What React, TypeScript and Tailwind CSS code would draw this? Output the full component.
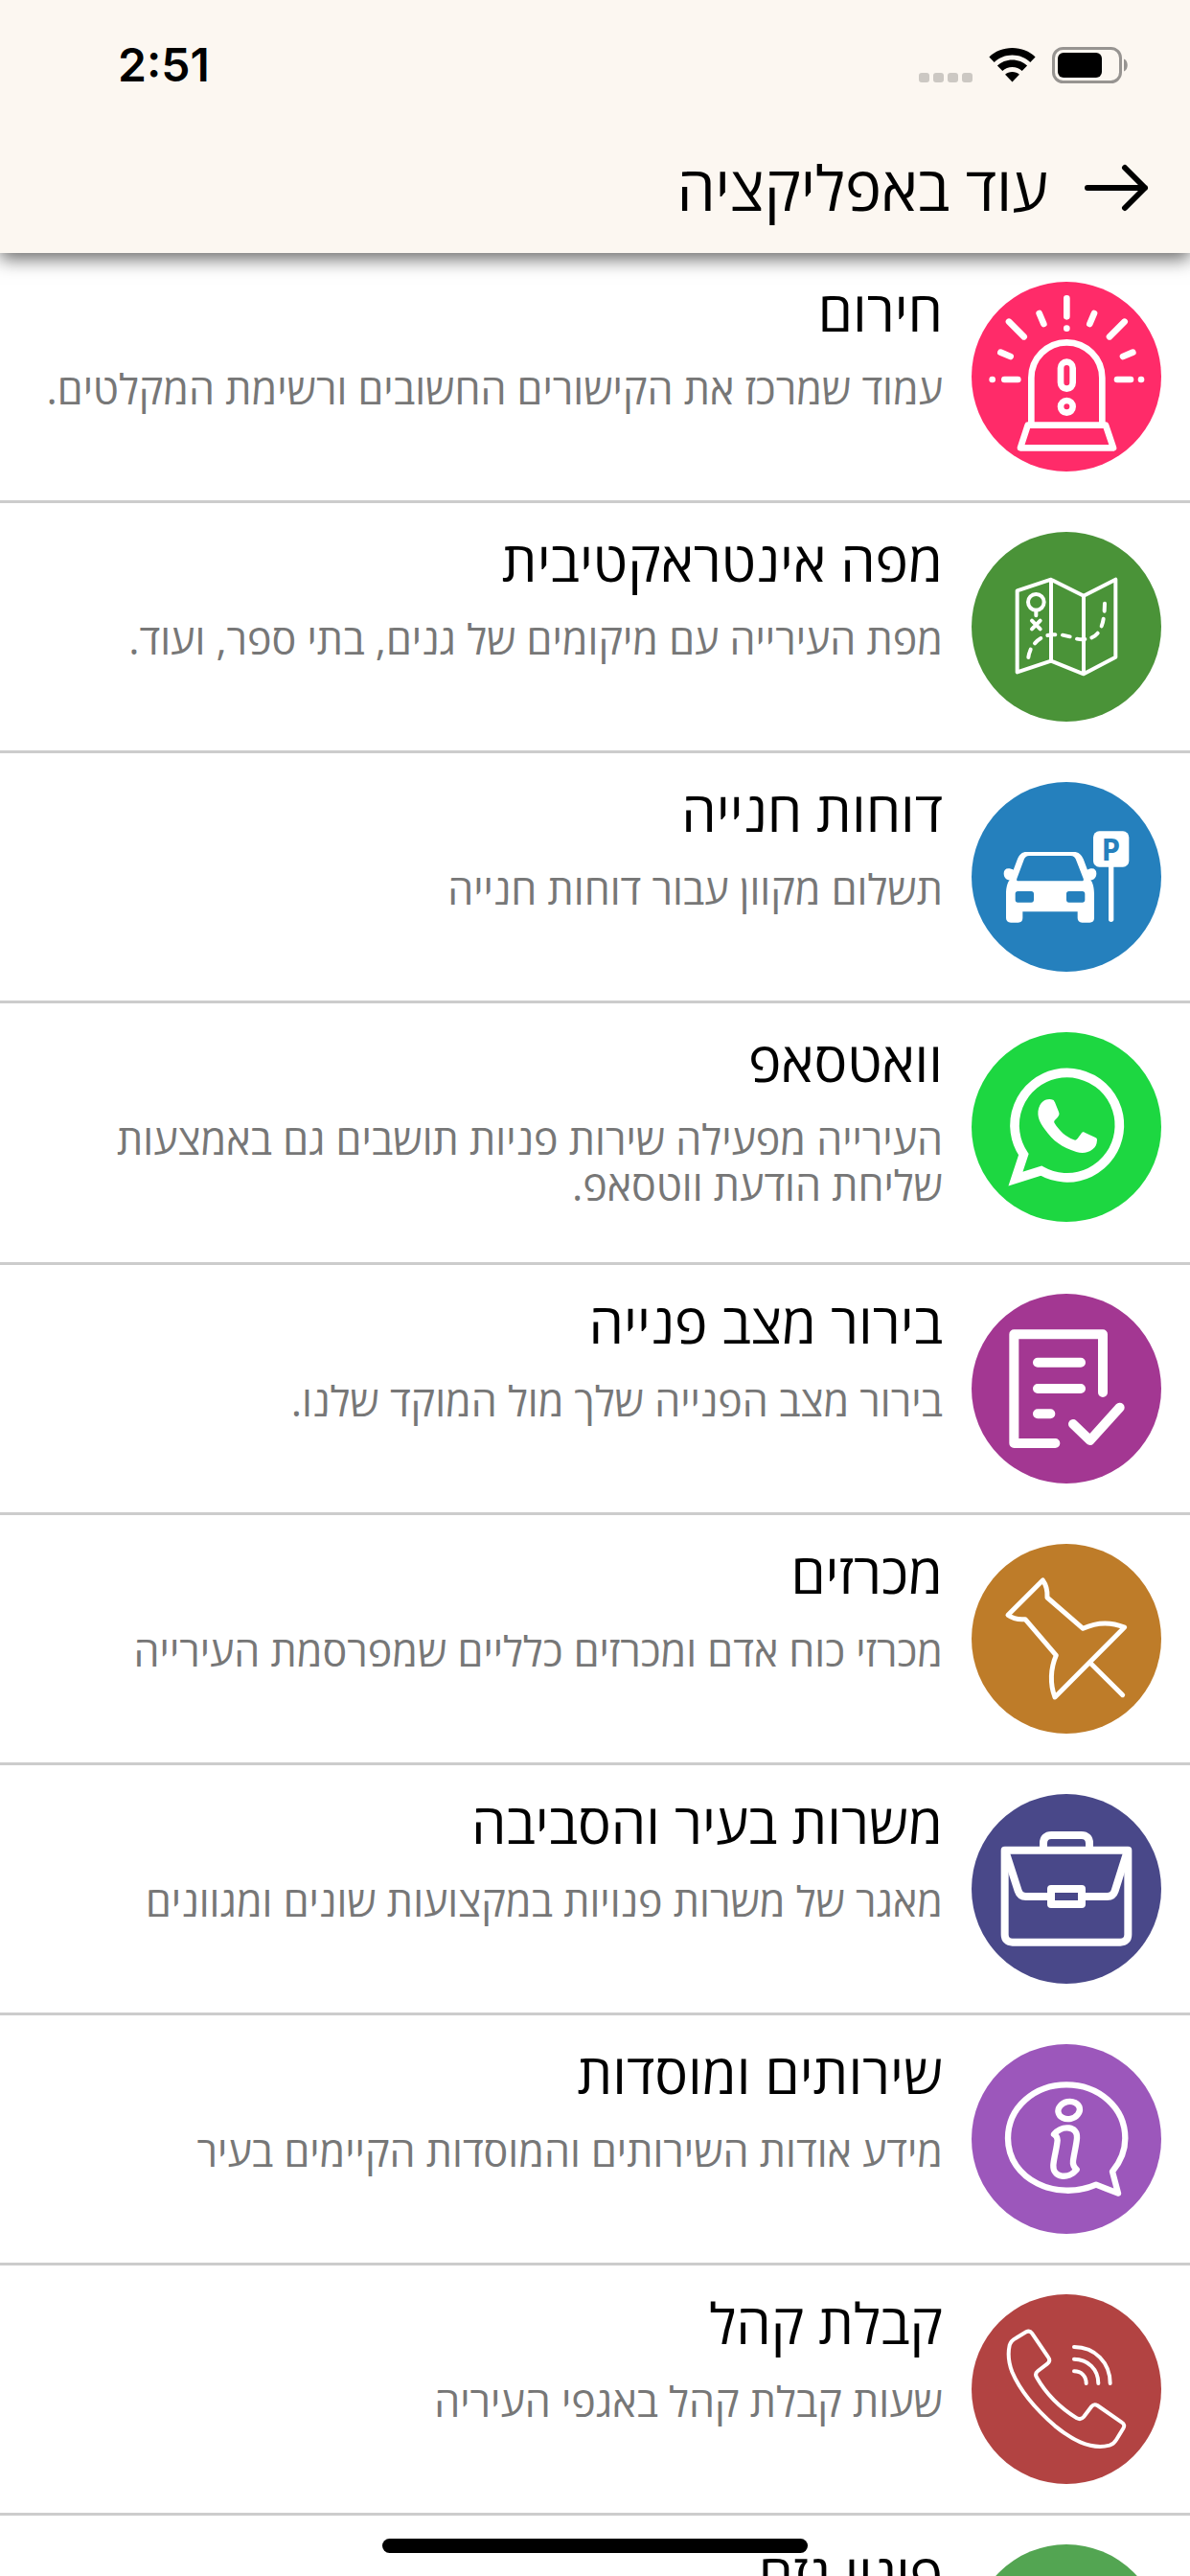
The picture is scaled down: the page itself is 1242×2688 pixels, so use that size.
import React from 'react';
import { Leaf } from 'lucide-react';

const SirenIcon = () => (
  <svg viewBox="42 42 594 594" className="w-full h-full" fill="none" stroke="white" strokeWidth="20" strokeLinecap="round" strokeLinejoin="round" aria-hidden="true">
    <path d="M229 490V343a111 111 0 0 1 222 0v147" />
    <path d="M218 491h244l24 71H195z" />
    <rect x="321" y="293" width="38" height="84" rx="19" />
    <circle cx="340" cy="433" r="19" />
    <path d="M340 94v57M254 141l14 33M426 141l-14 33M159 167l47 47M521 167l-47 47M133 263l31 13M547 263l-31 13M145 348h42M498 348h42" />
    <path d="M340 188v.1M107 348h.1M573 348h.1" />
  </svg>
);

const MapIcon = () => (
  <svg viewBox="42 45 594 594" className="w-full h-full" fill="none" stroke="white" strokeWidth="12" strokeLinecap="round" strokeLinejoin="round" aria-hidden="true">
    <path d="M185 229l106-35 102 51 100-51v243l-100 53-102-41-106 35zM291 194v255M393 245v245" />
    <circle cx="244" cy="265" r="25" />
    <path d="M244 290v17M231 323l26 26M257 323l-26 26" />
    <path d="M220 438c1-9 4-18 7-25M240 394c6-7 12-12 19-16M280 369c8-2 17-3 24-2M327 368l23 5M372 380c9 2 18 3 25 1M418 376c8-3 14-8 19-14M449 340c3-8 5-15 6-23M458 293l1-24" />
  </svg>
);

const ParkingIcon = () => (
  <svg viewBox="42 48 594 594" className="w-full h-full" aria-hidden="true">
    <path
      fill="white"
      fillRule="evenodd"
      d="M214 267h148c15 0 24 8 30 22l13 34c3-2 8-4 14-4 9 0 14 6 14 15 0 13-7 21-18 21 7 8 11 26 11 44v75c0 9-5 14-14 14h-24c-9 0-14-6-14-14v-20H202v20c0 9-5 14-14 14h-23c-10 0-15-6-15-14v-75c0-19 4-36 11-44-11 0-18-8-18-21 0-9 5-15 14-15 6 0 12 2 16 4l13-34c6-14 14-22 28-22zM222 279c-8 0-12 4-15 10l-23 61c-2 5 0 8 5 8h198c5 0 7-3 5-8l-24-61c-3-6-7-10-15-10zM187 390c-5 0-8 3-8 8v19c0 5 3 8 8 8h42c5 0 8-3 8-8v-19c0-5-3-8-8-8zM347 390c-5 0-8 3-8 8v19c0 5 3 8 8 8h42c5 0 8-3 8-8v-19c0-5-3-8-8-8z"
    />
    <rect x="423" y="202" width="112" height="112" rx="19" fill="white" />
    <path d="M479 312v166" stroke="white" strokeWidth="16" strokeLinecap="round" />
    <text x="478" y="293" textAnchor="middle" fontSize="94" className="fill-[#2580bd] font-['Open_Sans',sans-serif] font-bold">P</text>
  </svg>
);

const WhatsappIcon = () => (
  <svg viewBox="42 51 594 594" className="w-full h-full" aria-hidden="true">
    <path d="M205 434A164 164 0 1 1 260 485L180 510z" fill="none" stroke="white" strokeWidth="29" />
    <path fill="white" d="M273 263c8-3 18-3 24 0 3 1 4 4 6 8l12 30c2 5 2 8 0 11-3 6-8 11-13 16-2 3-2 5 0 8 15 24 34 42 60 52 4 2 7 1 9-1 5-5 10-12 14-18 3-5 6-6 11-4l34 16c4 2 5 4 5 8-1 14-5 22-14 29-15 12-33 14-51 8-46-15-71-32-99-71-18-24-28-48-15-75 4-8 10-14 17-17z" />
  </svg>
);

const FormIcon = () => (
  <svg viewBox="42 45 594 594" className="w-full h-full" fill="none" stroke="white" strokeWidth="30" strokeLinecap="round" strokeLinejoin="round" aria-hidden="true">
    <path d="M304 513H175V172h278v182" />
    <path d="M249 260h135M249 342h135M249 421h40M360 453l53 51 93-103" />
  </svg>
);

const PinIcon = () => (
  <svg viewBox="42 48 594 594" className="w-full h-full" fill="none" stroke="white" strokeWidth="15" strokeLinecap="round" strokeLinejoin="round" aria-hidden="true">
    <path d="M265 162L156 271c15 11 33 15 54 13l97 113c-18 41-20 90-4 131l218-219c-43-17-90-15-130 4L279 216c1-20-3-39-14-54zM413 420l102 101" />
  </svg>
);

const BriefcaseIcon = () => (
  <svg viewBox="42 51 594 594" className="w-full h-full" fill="none" stroke="white" strokeWidth="24" strokeLinejoin="round" aria-hidden="true">
    <path d="M146 227h386v264c0 15-9 24-24 24H170c-15 0-24-9-24-24z" />
    <path d="M267 227v-22c0-16 9-25 25-25h94c16 0 25 9 25 25v22" />
    <path d="M150 236l38 118c4 12 11 18 24 18h79M528 236l-37 118c-4 12-11 18-24 18h-80" />
    <rect x="291" y="348" width="96" height="48" />
  </svg>
);

const InfoIcon = () => (
  <svg viewBox="42 54 594 594" className="w-full h-full" fill="none" stroke="white" strokeWidth="19" strokeLinecap="round" strokeLinejoin="round" aria-hidden="true">
    <path d="M432 494C311 547 156 480 156 349c0-98 84-168 183-168 100 0 184 70 184 168 0 38-14 73-40 104l18 68z" />
    <ellipse cx="347" cy="261" rx="34" ry="27" transform="rotate(-12 347 261)" />
    <path d="M300 336c27-30 75-26 72 12-2 23-9 48-12 71-2 15 3 21 11 28-25 31-75 26-73-14 2-26 11-52 13-78 0-9-4-15-11-19z" />
  </svg>
);

const PhoneIcon = () => (
  <svg viewBox="42 57 594 594" className="w-full h-full" fill="none" stroke="white" strokeWidth="12" strokeLinecap="round" strokeLinejoin="round" aria-hidden="true">
    <path d="M181 194l32-19c7-4 13-3 18 4l51 75c6 8 5 15-3 21l-29 22c-8 6-9 12-4 20 29 51 73 95 126 128 8 4 15 3 21-4l25-33c5-6 11-7 18-3l76 53c8 5 10 11 5 19l-22 36c-5 8-11 14-21 17-63 16-123-22-171-61-53-46-106-103-134-169-11-29-14-56-8-83 3-11 10-18 20-23z" />
    <path d="M363 298c23 0 38 15 38 38M363 260c43 0 76 32 76 76M363 222c65 0 113 49 113 114" />
  </svg>
);

const items = [
  { title: 'חירום', text: 'עמוד שמרכז את הקישורים החשובים ורשימת המקלטים.', color: 'bg-[#ff2b69]', icon: <SirenIcon /> },
  { title: 'מפה אינטראקטיבית', text: 'מפת העירייה עם מיקומים של גנים, בתי ספר, ועוד.', color: 'bg-[#4a9338]', icon: <MapIcon /> },
  { title: 'דוחות חנייה', text: 'תשלום מקוון עבור דוחות חנייה', color: 'bg-[#2580bd]', icon: <ParkingIcon /> },
  { title: 'וואטסאפ', text: 'העירייה מפעילה שירות פניות תושבים גם באמצעות שליחת הודעת ווטסאפ.', color: 'bg-[#1dd741]', icon: <WhatsappIcon /> },
  { title: 'בירור מצב פנייה', text: 'בירור מצב הפנייה שלך מול המוקד שלנו.', color: 'bg-[#a33792]', icon: <FormIcon /> },
  { title: 'מכרזים', text: 'מכרזי כוח אדם ומכרזים כלליים שמפרסמת העירייה', color: 'bg-[#be7c29]', icon: <PinIcon /> },
  { title: 'משרות בעיר והסביבה', text: 'מאגר של משרות פנויות במקצועות שונים ומגוונים', color: 'bg-[#494889]', icon: <BriefcaseIcon /> },
  { title: 'שירותים ומוסדות', text: 'מידע אודות השירותים והמוסדות הקיימים בעיר', color: 'bg-[#9c57bb]', icon: <InfoIcon /> },
  { title: 'קבלת קהל', text: 'שעות קבלת קהל באגפי העיריה', color: 'bg-[#b24342]', icon: <PhoneIcon /> },
  { title: 'פינוי גזם', text: 'מועדי פינוי הגזם בעיר', color: 'bg-[#53a552]', icon: <Leaf className="text-white" size={100} strokeWidth={1} /> }
];

function StatusBar() {
  return (
    <div dir="ltr" className="h-[132px] pt-1 pl-[123px] pr-[65px] flex items-center justify-between">
      <span className="font-['Inter',sans-serif] font-semibold text-[48px] leading-none">2:51</span>
      <div className="flex items-center gap-[17px]">
        <div className="flex gap-1 pt-[26px]">
          {[0, 1, 2, 3].map((dot) => (
            <span key={dot} className="w-[11px] h-[10px] rounded-[3px] bg-[#ccc8c3]" />
          ))}
        </div>
        <svg width="49" height="36" viewBox="0 0 49 36" aria-hidden="true">
          <path d="M24.500 0C34 0 42.500 3.500 48.600 9.500L43.300 15C38.300 10.200 31.700 7.500 24.500 7.500S10.700 10.200 5.700 15L.4 9.500C6.500 3.500 15 0 24.500 0z" />
          <path d="M24.500 12.500c6 0 11.500 2.300 15.600 6.100l-5.400 5.500a15 15 0 0 0-20.400 0l-5.400-5.500c4.100-3.800 9.600-6.100 15.600-6.100z" />
          <path d="M24.500 25c3 0 5.500 1 7.400 2.700L24.500 35.500l-7.400-7.800C19 26 21.500 25 24.500 25z" />
        </svg>
        <svg width="79" height="38" viewBox="0 0 79 38" aria-hidden="true">
          <rect x="1.500" y="1.500" width="70" height="35" rx="10" fill="none" stroke="#979491" strokeWidth="3" />
          <rect x="6" y="6" width="46" height="26" rx="6" />
          <path d="M75 12.500c5 2 5 11 0 13z" fill="#979491" />
        </svg>
      </div>
    </div>
  );
}

export default function App() {
  return (
    <div dir="rtl" lang="he" className="h-screen flex flex-col overflow-hidden bg-white text-black font-['Open_Sans','Noto_Sans',sans-serif]">
      <header className="relative z-10 shrink-0 bg-[#fcf7f1] shadow-[0_6px_18px_rgba(0,0,0,0.6)]">
        <StatusBar />
        <div className="h-[132px] pb-1 px-[42px] flex items-center gap-[36px]">
          <button type="button" aria-label="חזרה">
            <svg width="70" height="50" viewBox="0 0 70 50" fill="none" stroke="black" strokeWidth="6" strokeLinecap="round" strokeLinejoin="round" aria-hidden="true">
              <path d="M5 25h60M44 4l21 21-21 21" />
            </svg>
          </button>
          <h1 className="text-[64px] leading-[80px] font-normal">עוד באפליקציה</h1>
        </div>
      </header>

      <main className="flex-1 min-h-0 overflow-y-auto [scrollbar-width:none]">
        <ul>
          {items.map((item) => (
            <li key={item.title} className="border-b-3 border-[#cccccc]">
              <a href="#" className="flex items-start gap-[30px] p-[30px]">
                <span className={`w-[198px] h-[198px] shrink-0 rounded-full flex items-center justify-center ${item.color}`}>
                  {item.icon}
                </span>
                <div className="min-w-0 flex-1 pb-[26px]">
                  <h2 className="text-[58px] leading-[60px] mb-[28px]">{item.title}</h2>
                  <p className="text-[43px] leading-[48px] text-[#777777]">{item.text}</p>
                </div>
              </a>
            </li>
          ))}
        </ul>
      </main>

      {/* Home indicator */}
      <div className="fixed z-20 bottom-6 left-1/2 -translate-x-1/2 w-[444px] h-[15px] rounded-full bg-black" />
    </div>
  );
}
